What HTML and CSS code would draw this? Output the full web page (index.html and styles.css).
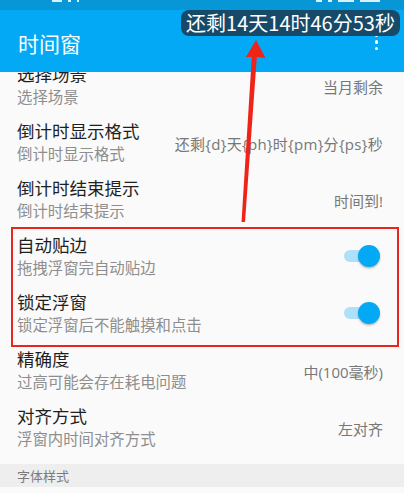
FILE: index.html
```html
<!DOCTYPE html>
<html lang="zh">
<head>
<meta charset="utf-8">
<link rel="stylesheet" href="styles.css">
</head>
<body>
<div class="phone">
  <div class="statusbar">
    <span class="sb-bit b1"></span><span class="sb-bit b2"></span><span class="sb-bit b3"></span>
    <span class="sb-spacer"></span>
    <span class="sb-bit b4"></span><span class="sb-bit b5"></span><span class="sb-bit b6"></span><span class="sb-bit b7"></span>
  </div>
  <header class="appbar">
    <div class="appbar-title">时间窗</div>
    <div class="overflow"><i></i><i></i><i></i></div>
  </header>
  <main class="content">
    <div class="list">
      <div class="row">
        <div class="texts"><div class="title">选择场景</div><div class="summary">选择场景</div></div>
        <div class="value">当月剩余</div>
      </div>
      <div class="row">
        <div class="texts"><div class="title">倒计时显示格式</div><div class="summary">倒计时显示格式</div></div>
        <div class="value wide">还剩{d}天{ph}时{pm}分{ps}秒</div>
      </div>
      <div class="row">
        <div class="texts"><div class="title">倒计时结束提示</div><div class="summary">倒计时结束提示</div></div>
        <div class="value">时间到!</div>
      </div>
      <div class="row">
        <div class="texts"><div class="title">自动贴边</div><div class="summary">拖拽浮窗完自动贴边</div></div>
        <div class="switch"><span class="track"></span><span class="thumb"></span></div>
      </div>
      <div class="row">
        <div class="texts"><div class="title">锁定浮窗</div><div class="summary">锁定浮窗后不能触摸和点击</div></div>
        <div class="switch"><span class="track"></span><span class="thumb"></span></div>
      </div>
      <div class="row">
        <div class="texts"><div class="title">精确度</div><div class="summary">过高可能会存在耗电问题</div></div>
        <div class="value">中(100毫秒)</div>
      </div>
      <div class="row">
        <div class="texts"><div class="title">对齐方式</div><div class="summary">浮窗内时间对齐方式</div></div>
        <div class="value">左对齐</div>
      </div>
      <div class="category">字体样式</div>
    </div>
  </main>
  <div class="pill">还剩14天14时46分53秒</div>
  <div class="redbox"></div>
  <svg class="arrow" width="404" height="493" viewBox="0 0 404 493">
    <polygon points="241.5,222 245,222 256.8,57 265.5,58 256,40 246,57 251.8,57" fill="#ee2419"/>
  </svg>
</div>
</body>
</html>
```

FILE: styles.css
```css
* { box-sizing: border-box; }
html, body { margin: 0; padding: 0; }
body {
  font-family: "Noto Sans CJK SC", "Noto Sans", sans-serif;
  background: #fafafa;
}
.phone {
  position: relative;
  width: 404px;
  height: 493px;
  overflow: hidden;
  background: #fafafa;
  display: flex;
  flex-direction: column;
}
.statusbar {
  height: 10px;
  flex: none;
  background: #0897d6;
  display: flex;
  align-items: flex-start;
  padding-left: 52px;
}
.sb-bit { display: block; background: rgba(255,255,255,0.85); height: 2px; margin-right: 6px; }
.b1 { width: 10px; }
.b2 { width: 3px; }
.b3 { width: 2px; }
.sb-spacer { flex: 1; }
.b4 { width: 6px; }
.b5 { width: 4px; }
.b6 { width: 16px; }
.b7 { width: 20px; margin-right: 24px; }
.appbar {
  height: 62px;
  flex: none;
  background: #03a9f4;
  display: flex;
  align-items: center;
  justify-content: space-between;
  padding: 0 26px 0 18px;
  position: relative;
  z-index: 2;
}
.appbar-title {
  color: #ffffff;
  font-size: 21px;
  line-height: 26px;
  margin-top: 3px;
}
.overflow {
  display: flex;
  flex-direction: column;
  gap: 3px;
  margin-top: 2px;
}
.overflow i {
  display: block;
  width: 3.5px;
  height: 3.5px;
  border-radius: 50%;
  background: #ffffff;
}
.content {
  flex: 1;
  overflow: hidden;
  position: relative;
  z-index: 1;
}
.list { margin-top: -16px; }
.row {
  height: 57px;
  display: flex;
  align-items: center;
  justify-content: space-between;
  padding: 0 21px 0 17px;
}
.texts {
  display: flex;
  flex-direction: column;
  padding-bottom: 1px;
}
.title {
  font-size: 17.5px;
  line-height: 24px;
  color: #1f1f1f;
}
.summary {
  font-size: 15.4px;
  line-height: 20px;
  color: #8e8e8e;
}
.value {
  font-family: "Open Sans", "Noto Sans CJK SC", sans-serif;
  font-size: 15px;
  color: #777777;
  white-space: nowrap;
  margin-top: 3px;
}
.value.wide { letter-spacing: 0.3px; }
.switch {
  position: relative;
  width: 36px;
  height: 22px;
  margin-right: 3px;
  margin-top: 1px;
}
.track {
  position: absolute;
  left: 0;
  top: 5px;
  width: 34px;
  height: 12px;
  border-radius: 6px;
  background: #aee0fa;
}
.thumb {
  position: absolute;
  right: 0;
  top: 0;
  width: 22px;
  height: 22px;
  border-radius: 50%;
  background: #03a9f4;
  box-shadow: 0 1.5px 2px rgba(0,0,0,0.25);
}
.category {
  margin-top: 9px;
  height: 23px;
  background: #eeeeee;
  color: #7a7a7a;
  font-size: 13px;
  line-height: 23px;
  padding-left: 17px;
}
.pill {
  position: absolute;
  left: 181px;
  top: 10px;
  width: 219px;
  height: 26px;
  border-radius: 8px;
  background: #174a69;
  color: #ffffff;
  font-size: 20px;
  line-height: 26px;
  text-align: center;
  white-space: nowrap;
  z-index: 5;
}
.redbox {
  position: absolute;
  left: 11px;
  top: 227px;
  width: 388px;
  height: 120px;
  border: 2.5px solid #e8261d;
  z-index: 4;
}
.arrow {
  position: absolute;
  left: 0;
  top: 0;
  z-index: 6;
}
```
